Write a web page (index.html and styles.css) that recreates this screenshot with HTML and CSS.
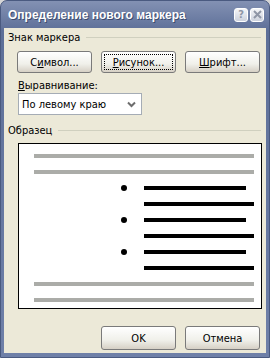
FILE: index.html
```html
<!DOCTYPE html>
<html lang="ru">

<head>
  <meta charset="UTF-8">
  <title>Определение нового маркера</title>
  <link rel="stylesheet" href="styles.css">
</head>

<body>
  <div class="window">
    <div class="titlebar">
      <span class="title">Определение нового маркера</span>
      <span class="tbtn">?</span>
      <span class="tbtn close">
        <svg width="9" height="9" viewBox="0 0 9 9"><path d="M1 1L8 8M8 1L1 8" stroke="#8f96a6" stroke-width="2"/></svg>
      </span>
    </div>
    <div class="client">
      <div class="group-label"><span>Знак маркера</span></div>
      <div class="btn-row">
        <button class="btn">С<u>и</u>мвол...</button>
        <button class="btn focus"><u>Р</u>исунок...</button>
        <button class="btn"><u>Ш</u>рифт...</button>
      </div>
      <div class="field-label"><u>В</u>ыравнивание:</div>
      <div class="select">
        <span>По левому краю</span>
        <svg width="9" height="7" viewBox="0 0 9 7"><path d="M1 1.5L4.5 5L8 1.5" fill="none" stroke="#6d6d6d" stroke-width="2"/></svg>
      </div>
      <div class="group-label sample"><span>Образец</span></div>
      <div class="preview">
        <div class="ln gray"></div>
        <div class="ln gray"></div>
        <div class="ln short"><i class="dot"></i></div>
        <div class="ln long"></div>
        <div class="ln short"><i class="dot"></i></div>
        <div class="ln long"></div>
        <div class="ln short"><i class="dot"></i></div>
        <div class="ln long"></div>
        <div class="ln gray"></div>
        <div class="ln gray"></div>
      </div>
      <div class="footer">
        <button class="btn">OK</button>
        <button class="btn">Отмена</button>
      </div>
    </div>
  </div>
</body>

</html>
```

FILE: styles.css
```css
body {
  margin: 0;
  background: #d6d6d6;
  font-family: "DejaVu Sans Condensed", "DejaVu Sans", sans-serif;
  font-size: 11px;
  color: #000;
}

.window {
  width: 270px;
  height: 358px;
  box-sizing: border-box;
  background: linear-gradient(#8391b3, #5d6f98 30px, #6f80a8);
  border: 1px solid #4a5a80;
  border-radius: 7px 7px 0 0;
  padding: 0 3px 4px;
  display: flex;
  flex-direction: column;
}

.titlebar {
  flex: none;
  height: 27px;
  display: flex;
  align-items: center;
  padding: 0 2px 0 4px;
  gap: 2px;
}

.title {
  flex: 1;
  color: #fff;
  font-family: "Liberation Sans", sans-serif;
  font-weight: bold;
  font-size: 12px;
  text-shadow: 1px 1px 0 #3c4b6e;
}

.tbtn {
  width: 14px;
  height: 14px;
  box-sizing: border-box;
  border: 1px solid #fff;
  border-radius: 3px;
  background: linear-gradient(#f4f5f8, #cdd2dd);
  color: #8f96a6;
  font-weight: bold;
  font-size: 11px;
  display: flex;
  align-items: center;
  justify-content: center;
}

.client {
  flex: 1;
  background: #ece9d8;
  padding: 0 5px 3px 4px;
  display: flex;
  flex-direction: column;
}

.group-label {
  flex: none;
  margin-top: 3px;
  display: flex;
  align-items: center;
  gap: 6px;
  height: 13px;
}

.group-label::after {
  content: "";
  flex: 1;
  height: 1px;
  background: #d0d0bf;
}

.btn-row {
  flex: none;
  margin-top: 7px;
  display: flex;
  gap: 9px;
  padding-left: 9px;
}

.btn {
  flex: none;
  width: 75px;
  height: 22px;
  border: 1px solid #7a7a7a;
  border-radius: 3px;
  background: linear-gradient(#ffffff, #f0f0ea 60%, #d6d0c5);
  font: inherit;
  padding: 0;
  display: flex;
  align-items: center;
  justify-content: center;
}

.btn.focus {
  outline: 1px dotted #000;
  outline-offset: -4px;
}

.field-label {
  flex: none;
  margin: 6px 0 0 10px;
  height: 13px;
}

.select {
  flex: none;
  margin: 1px 0 0 10px;
  width: 124px;
  height: 22px;
  box-sizing: border-box;
  background: #fff;
  border: 1px solid #a5acb5;
  display: flex;
  align-items: center;
  justify-content: space-between;
  padding: 0 5px 0 3px;
}

.sample {
  margin-top: 9px;
}

.preview {
  flex: none;
  margin: 6px 0 0 10px;
  width: 244px;
  height: 166px;
  box-sizing: border-box;
  background: #fff;
  border: 1px solid #000;
  padding: 10px 7px 0 15px;
  display: flex;
  flex-direction: column;
  gap: 12px;
}

.ln {
  height: 4px;
  flex: none;
  position: relative;
}

.ln.gray {
  background: #abaca8;
}

.ln.short {
  margin-left: 110px;
  margin-right: 8px;
  background: #000;
}

.ln.long {
  margin-left: 110px;
  background: #000;
}

.dot {
  position: absolute;
  left: -23px;
  top: -1px;
  width: 6px;
  height: 6px;
  border-radius: 50%;
  background: #000;
}

.footer {
  flex: none;
  margin-top: 17px;
  display: flex;
  gap: 9px;
  justify-content: flex-end;
  padding-right: 1px;
}

.footer .btn {
  height: 24px;
}
```
